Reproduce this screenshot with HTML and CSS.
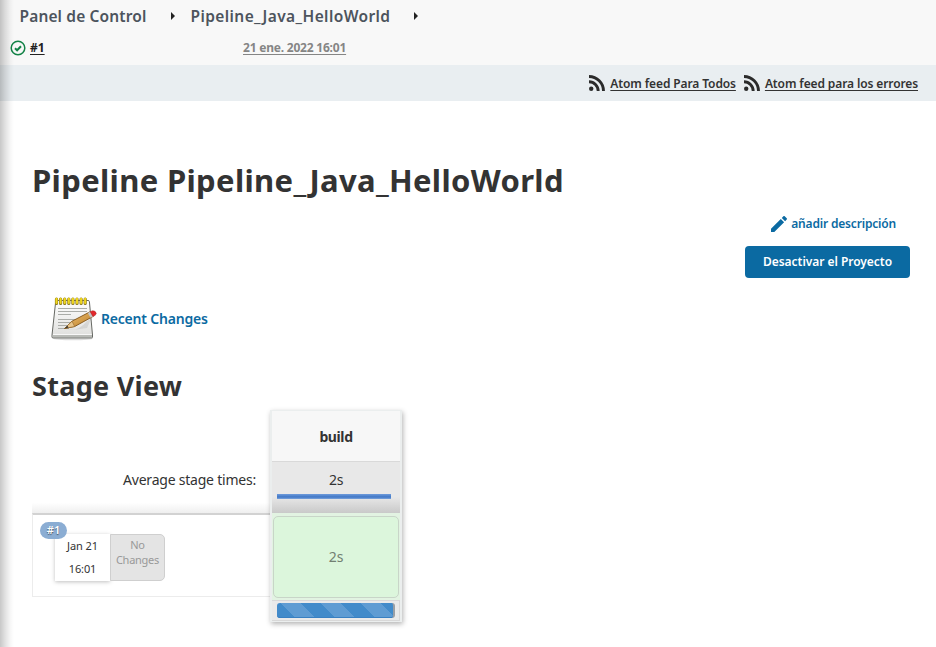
FILE: index.html
```html
<!DOCTYPE html>
<html lang="es">
<head>
<meta charset="utf-8">
<title>Pipeline_Java_HelloWorld</title>
<link rel="stylesheet" href="styles.css">
</head>
<body>
<div class="edge-shadow"></div>
<header class="top">
  <nav class="crumbs">
    <a class="crumb-home">Panel de Control</a>
    <svg class="arrow" width="4" height="8" viewBox="0 0 4 8"><path d="M0 0L4 4L0 8Z" fill="#222"/></svg>
    <a class="crumb-job">Pipeline_Java_HelloWorld</a>
    <svg class="arrow" width="4" height="8" viewBox="0 0 4 8"><path d="M0 0L4 4L0 8Z" fill="#222"/></svg>
  </nav>
  <div class="build-row">
    <svg width="16" height="16" viewBox="0 0 16 16" fill="none" stroke="#138347"><circle cx="8" cy="8" r="6.8" stroke-width="1.5"/><path d="M5 8.3L7.1 10.3L11 6.2" stroke-width="2"/></svg>
    <a class="build-number">#1</a>
    <a class="build-date">21 ene. 2022 16:01</a>
  </div>
</header>
<div class="feeds">
  <a class="feed"><svg width="16" height="16" viewBox="0 0 16 16" fill="none" stroke="#2b2b2b" stroke-width="2.9"><circle cx="2.2" cy="13.8" r="2.2" fill="#2b2b2b" stroke="none"/><path d="M0 6.800A9.200 9.200 0 0 1 9.200 16M0 1.500A14.500 14.500 0 0 1 14.500 16"/></svg><span>Atom feed Para Todos</span></a>
  <a class="feed"><svg width="16" height="16" viewBox="0 0 16 16" fill="none" stroke="#2b2b2b" stroke-width="2.9"><circle cx="2.2" cy="13.8" r="2.2" fill="#2b2b2b" stroke="none"/><path d="M0 6.800A9.200 9.200 0 0 1 9.200 16M0 1.500A14.500 14.500 0 0 1 14.500 16"/></svg><span>Atom feed para los errores</span></a>
</div>
<main>
  <h1>Pipeline Pipeline_Java_HelloWorld</h1>
  <div class="actions">
    <a class="describe"><svg width="16" height="16" viewBox="0 0 16 16" fill="#0b6aa2"><path d="M0 12.7V16H3.3L13.1 6.2L9.8 2.9ZM15.7 3.6C16.1 3.2 16.1 2.7 15.7 2.3L13.7.3C13.3-.1 12.8-.1 12.4.3L10.8 1.9L14.1 5.2Z"/></svg><span>añadir descripción</span></a>
    <button class="disable">Desactivar el Proyecto</button>
  </div>
  <a class="recent">
    <svg width="48" height="48" viewBox="0 0 48 48">
      <defs>
        <linearGradient id="paper" x1="0" y1="0" x2="0" y2="1"><stop offset="0" stop-color="#fff"/><stop offset="1" stop-color="#dededc"/></linearGradient>
        <linearGradient id="wood" x1="0" y1="0" x2="1" y2="1"><stop offset="0" stop-color="#f3c77b"/><stop offset="1" stop-color="#b87920"/></linearGradient>
      </defs>
      <ellipse cx="24" cy="44.5" rx="20" ry="1.8" fill="#ddd"/>
      <path d="M6.7 7.5Q6.8 6.5 8 6.5H39Q40.3 6.5 40.4 7.5L43.5 41V43Q43.5 43.9 42.5 43.9H4Q3 43.9 3 43V41Z" fill="url(#paper)" stroke="#666863"/>
      <path d="M3.6 40.9H43V43.3H3.6Z" fill="#b9bbb7"/>
      <path d="M4 40.5H42.7" stroke="#f7f7f7"/>
      <path d="M9 14.5H38M9 17.5H38M9 20.5H22M9 25.5H33M9 28.5H28M9 31.5H23M9 34.5H20" stroke="#aaaca8"/>
      <path d="M17 35Q28 39 38 27L43 23L38 34L24 36Z" fill="#777" opacity=".17"/>
      <path d="M7.5 5V9.5M11.6 5V9.5M15.700 5V9.5M19.800 5V9.5M23.900 5V9.5M28 5V9.5M32.100 5V9.5M36.200 5V9.5" stroke="#8b781d" stroke-width="3.2" stroke-linecap="round"/>
      <path d="M7.5 4.8V9M11.6 4.8V9M15.700 4.8V9M19.800 4.8V9M23.900 4.8V9M28 4.8V9M32.100 4.8V9M36.200 4.8V9" stroke="#f0d71d" stroke-width="2.1" stroke-linecap="round"/>
      <path d="M15.500 34.500L23 27.200L41.400 17.600L44.300 22.300L25.700 32.500Z" fill="url(#wood)" stroke="#805217" stroke-width=".9"/>
      <path d="M15.500 34.500L23 27.200L25.700 32.500Z" fill="#e8c58b" stroke="#916323" stroke-width=".6"/>
      <path d="M15.500 34.500L18.500 31.800L19.500 33.600Z" fill="#333"/>
      <path d="M38.800 18.900L41.600 17.500L44.200 22.400L41.600 23.800Z" fill="#c3c6c7"/>
      <path d="M41.200 17.700L43.700 16.700Q46.700 16.700 47.200 19.400Q47 21.400 43.900 22.500Z" fill="#e3282d" stroke="#a9201e" stroke-width=".5"/>
    </svg>
    <span>Recent Changes</span>
  </a>
  <h2>Stage View</h2>
  <section class="stage-view">
    <div class="runs">
      <div class="average-label">Average stage times:</div>
      <div class="run">
        <span class="badge">#1</span>
        <div class="run-box">
          <div class="when"><span>Jan 21</span><span>16:01</span></div>
          <div class="changes">No<br>Changes</div>
        </div>
      </div>
    </div>
    <div class="stage">
      <div class="stage-name">build</div>
      <div class="stage-average"><span>2s</span><i class="average-bar"></i></div>
      <div class="cell"><div class="success">2s</div></div>
      <div class="progress"><i class="progress-bar"></i></div>
    </div>
  </section>
</main>
</body>
</html>
```

FILE: styles.css
```css
* { box-sizing: border-box; }
body {
  margin: 0;
  height: 647px;
  overflow: hidden;
  background: #fff;
  color: #333;
  font: 14px "Noto Sans", sans-serif;
  white-space: nowrap;
}
svg { display: block; flex: none; }
.edge-shadow {
  position: absolute;
  inset: 0 auto 0 0;
  width: 14px;
  background: linear-gradient(90deg, rgba(0,0,0,.22), rgba(0,0,0,.12) 35%, rgba(0,0,0,.03) 75%, transparent);
}
.top { height: 65px; background: #f8f8f8; }
.crumbs {
  display: flex;
  align-items: center;
  height: 32px;
  padding-left: 19.5px;
  color: #4d545d;
  font-size: 15.5px;
  font-weight: 600;
}
.crumb-home { width: 151px; letter-spacing: .14px; }
.crumb-job { width: 223px; margin-left: 16px; letter-spacing: .4px; }
.build-row {
  display: flex;
  align-items: center;
  height: 31px;
  padding-left: 10px;
  font-size: 12px;
  font-weight: 700;
}
.build-row a, .feed span { text-decoration: underline; text-underline-offset: 2px; text-decoration-thickness: 1px; text-decoration-skip-ink: none; }
.build-number { width: 213px; margin-left: 4px; color: #222; }
.build-date { color: #858585; letter-spacing: -.21px; }
.feeds {
  display: flex;
  justify-content: flex-end;
  align-items: center;
  gap: 8px;
  height: 36px;
  padding-right: 18px;
  background: #e9eef1;
  font-size: 12px;
  font-weight: 600;
  letter-spacing: -.115px;
}
.feed { display: flex; align-items: center; gap: 5px; }
main { padding: 59px 26px 0 32px; }
h1, h2 { margin: 0; font-weight: 700; }
h1 { font-size: 31px; line-height: 40px; letter-spacing: .34px; }
.actions { display: flex; flex-direction: column; align-items: flex-end; gap: 13px; padding-top: 14px; }
.describe {
  display: flex;
  align-items: center;
  gap: 4px;
  height: 19px;
  margin-right: 14px;
  color: #0b6aa2;
  font-size: 12px;
  font-weight: 600;
  letter-spacing: -.18px;
}
.disable {
  width: 165px;
  height: 32px;
  padding: 0 0 1px;
  border: 0;
  border-radius: 4px;
  background: #0b6aa2;
  color: #fff;
  font: 600 12px "Noto Sans", sans-serif;
  letter-spacing: -.04px;
}
.recent {
  display: flex;
  align-items: center;
  gap: 4px;
  height: 48px;
  margin: 16px 0 0 17px;
  color: #0b6aa2;
  font-weight: 600;
  letter-spacing: -.2px;
}
h2 { margin-top: 25px; font-size: 27px; line-height: 38px; letter-spacing: .3px; }
.stage-view { display: flex; margin-top: 5px; }
.runs { width: 238px; padding-top: 51px; }
.average-label {
  height: 52px;
  padding: 9px 14px 0 0;
  line-height: 20px;
  text-align: right;
  letter-spacing: -.22px;
  background: linear-gradient(#fff 80%, #efefef);
}
.run {
  height: 84px;
  padding: 7px 0 0 7px;
  border: solid #ececec;
  border-width: 2px 0 1px 1px;
  border-top-color: #d2d2d2;
}
.badge {
  position: relative;
  display: block;
  width: 27px;
  height: 17px;
  border-radius: 9px;
  background: #8badd3;
  color: #fff;
  font-size: 11px;
  font-weight: 600;
  line-height: 16px;
  text-align: center;
  text-shadow: 0 1px 1px #456;
}
.run-box { display: flex; width: 110px; height: 47px; margin: -5px 0 0 15px; font-size: 11px; }
.when {
  display: flex;
  flex-direction: column;
  gap: 8px;
  width: 55px;
  padding-top: 4px;
  line-height: 15px;
  text-align: center;
  letter-spacing: -.1px;
  box-shadow: 0 1px 4px rgba(0,0,0,.25);
}
.changes {
  width: 55px;
  padding-top: 2px;
  border: 1px solid #cfcfcf;
  border-radius: 0 5px 5px 0;
  background: #e4e4e4;
  color: #999;
  line-height: 15px;
  text-align: center;
  letter-spacing: -.25px;
}
.stage {
  width: 132px;
  height: 212px;
  border: 2px solid #ebeeee;
  border-top-width: 1px;
  background: #e8e8e8;
  box-shadow: 1px 2px 5px rgba(0,0,0,.3);
  text-align: center;
}
.stage-name {
  height: 51px;
  border-bottom: 1px solid #d9d9d9;
  background: #f7f7f7;
  font-weight: 700;
  line-height: 51px;
  letter-spacing: -.4px;
}
.stage-average { height: 51px; padding-top: 8px; line-height: 20px; background: linear-gradient(#e8e8e8 68%, #c9c9c9); }
.stage-average span { display: block; letter-spacing: -.3px; }
.average-bar { display: block; width: 114px; height: 5px; margin: 4px 0 0 5px; background: linear-gradient(#6e9bdb, #4077c6 60%, #7aa3dc); }
.cell { height: 87px; padding: 3px 1px 2px; background: #e2f3e2; }
.success {
  height: 82px;
  border: 1px solid #c8d5c8;
  border-radius: 5px;
  background: #dcf6dc;
  color: #728072;
  line-height: 80px;
}
.progress { height: 21px; padding: 2px 5px 0; border: 1px solid #d8d8d8; border-width: 1px 1px 1px 0; background: #eaeaea; }
.progress-bar {
  display: block;
  width: 118px;
  height: 15px;
  border-right: 2px solid #9a9fa5;
  border-radius: 3px;
  background: repeating-linear-gradient(45deg, #428bca 0 13px, #5f9cd3 13px 27.2px, #428bca 27.2px 28.28px);
  box-shadow: inset 0 -1px #3980c2;
}
```
